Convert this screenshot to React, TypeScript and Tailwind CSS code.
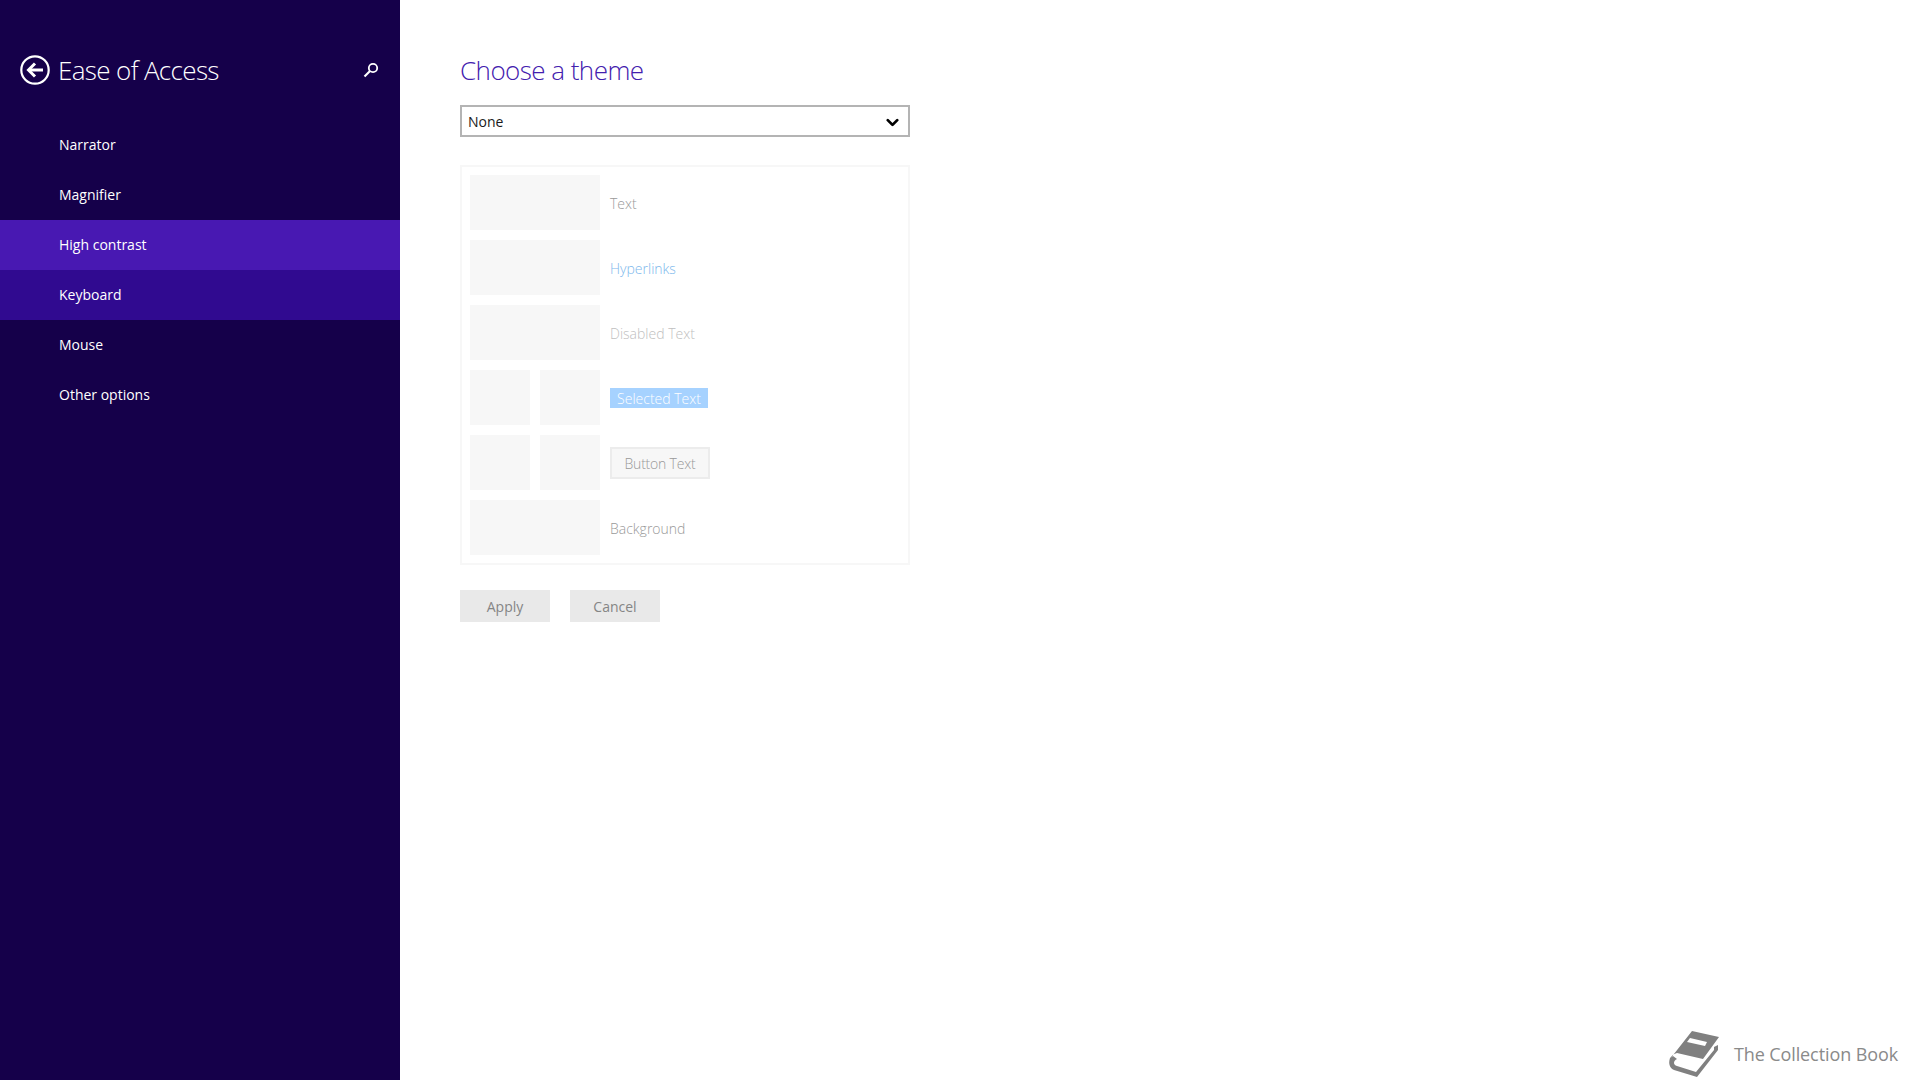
import { ChevronDown } from 'lucide-react';

const navItems = ['Narrator', 'Magnifier', 'High contrast', 'Keyboard', 'Mouse', 'Other options'];

function BackIcon() {
  return (
    <svg width="32" height="32" viewBox="0 0 32 32" fill="none" stroke="#ffffff" className="shrink-0">
      <circle cx="16" cy="16" r="13.7" strokeWidth="2.2" />
      <path d="M24 16H10" strokeWidth="3" />
      <path d="M16 9.5 9.5 16l6.5 6.5" strokeWidth="3" />
    </svg>
  );
}

function SearchIcon() {
  return (
    <svg width="16" height="16" viewBox="0 0 16 16" fill="none" stroke="#ffffff">
      <circle cx="10" cy="6" r="4.2" strokeWidth="1.8" />
      <path d="M7 9 1.5 14.5" strokeWidth="2.2" />
    </svg>
  );
}

function BookIcon() {
  return (
    <svg width="52" height="48" viewBox="0 0 52 48" className="shrink-0">
      <path d="M24 1 51 7 35 29 9 23C5 24 3 26 2 29Z" fill="#808080" />
      <path d="M22 8 39 12 37 16 19 12Z" fill="#ffffff" />
      <path d="M2 28C0 34 2 38 6 40L29 47 50 20V15L46 17V20L28 42 9 36C5 35 5 31 9 29L5 26Z" fill="#808080" />
    </svg>
  );
}

function Swatch({ split }: { split?: boolean }) {
  if (split) {
    return (
      <div className="flex gap-[10px] w-[130px] h-[55px] shrink-0">
        <div className="w-[60px] bg-[#f7f7f7]" />
        <div className="w-[60px] bg-[#f7f7f7]" />
      </div>
    );
  }
  return <div className="w-[130px] h-[55px] bg-[#f7f7f7] shrink-0" />;
}

export default function App() {
  return (
    <div className="flex w-full h-screen overflow-hidden bg-white font-['Open_Sans','Noto_Sans',sans-serif]">
      {/* Sidebar */}
      <div className="w-[400px] shrink-0 bg-[#15004a] pt-[54px]">
        <div className="flex items-center h-[32px] pl-[19px] pr-[21px]">
          <BackIcon />
          <span className="ml-[7px] text-[26px] leading-none font-light tracking-[-0.65px] text-white">Ease of Access</span>
          <span className="ml-auto flex"><SearchIcon /></span>
        </div>
        <div className="mt-[34px]">
          {navItems.map((item) => (
            <div
              key={item}
              className={
                'flex items-center h-[50px] pl-[59px] pb-[1px] text-[14px] text-white ' +
                (item === 'High contrast' ? 'bg-[#4818b2]' : item === 'Keyboard' ? 'bg-[#300a90]' : '')
              }
            >
              {item}
            </div>
          ))}
        </div>
      </div>

      {/* Main */}
      <div className="flex-1 relative pl-[60px] pt-[52px]">
        <h1 className="text-[26px] leading-[36px] font-light tracking-[-0.55px] text-[#4320ae]">Choose a theme</h1>

        <div className="mt-[17px] flex items-center justify-between w-[450px] h-[32px] border-2 border-[#b4b4b4] pl-[6px] pr-[6px] text-[14px] text-[#1a1a1a]">
          <span>None</span>
          <ChevronDown size={19} strokeWidth={3.5} className="text-black mt-[2px]" />
        </div>

        <div className="mt-[28px] w-[450px] h-[400px] border-2 border-[#f7f7f7] pl-[8px] pt-[8px] flex flex-col gap-[10px] text-[14px] font-light text-[#999999]">
          <div className="flex items-center gap-[10px]">
            <Swatch />
            <span className="mt-[2px]">Text</span>
          </div>
          <div className="flex items-center gap-[10px]">
            <Swatch />
            <span className="mt-[2px] text-[#7db8ec]">Hyperlinks</span>
          </div>
          <div className="flex items-center gap-[10px]">
            <Swatch />
            <span className="mt-[2px] text-[#c0c0c0]">Disabled Text</span>
          </div>
          <div className="flex items-center gap-[10px]">
            <Swatch split />
            <span className="flex items-center justify-center w-[98px] h-[20px] pt-[1px] bg-[#a6d2ff] text-white">Selected Text</span>
          </div>
          <div className="flex items-center gap-[10px]">
            <Swatch split />
            <span className="flex items-center justify-center w-[100px] h-[32px] pt-[1px] border-2 border-[#ececec] bg-[#f7f7f7] tracking-[-0.2px]">Button Text</span>
          </div>
          <div className="flex items-center gap-[10px]">
            <Swatch />
            <span className="mt-[2px]">Background</span>
          </div>
        </div>

        <div className="mt-[25px] flex gap-[20px]">
          <button className="w-[90px] h-[32px] bg-[#e9e9e9] text-[14px] font-medium text-[#858585]">Apply</button>
          <button className="w-[90px] h-[32px] bg-[#e9e9e9] text-[14px] font-medium text-[#858585]">Cancel</button>
        </div>

        {/* Watermark */}
        <div className="absolute right-[22px] bottom-[2px] flex items-center gap-[14px]">
          <BookIcon />
          <span className="text-[18px] tracking-[-0.1px] text-[#8a8a8a]">The Collection Book</span>
        </div>
      </div>
    </div>
  );
}
